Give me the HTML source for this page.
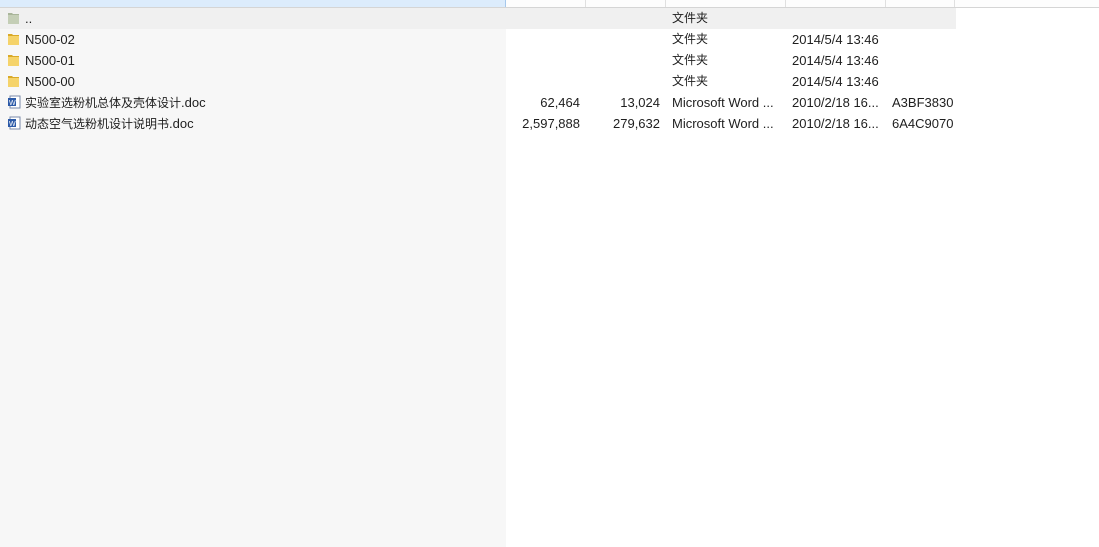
<!DOCTYPE html>
<html><head><meta charset="utf-8"><style>
body{margin:0;width:1099px;height:547px;overflow:hidden;background:#fff;font-family:"Liberation Sans","Noto Sans CJK SC",sans-serif;font-size:13px;color:#1e1e1e;position:relative}
.left{position:absolute;left:0;top:0;width:506px;height:547px;background:#f7f7f7}
.hdr{position:absolute;top:0;left:0;width:1099px;height:7px;background:#fdfdfd;border-bottom:1px solid #d5d5d5}
.hdr .n{position:absolute;left:0;top:0;width:505px;height:7px;background:#dcecfc;border-right:1px solid #a6c8ec}
.sep{position:absolute;top:0;height:7px;width:1px;background:#e0e0e0}
.row{position:absolute;left:0;height:21px;width:956px}
.row span{position:absolute;top:0;height:21px;line-height:21px;white-space:nowrap}
.c{font-size:12px}
.r{text-align:right}
.ic{position:absolute;left:7px;top:3px;width:14px;height:14px}
</style></head><body>
<div class="left"></div>
<div class="hdr"><div class="n"></div>
<div class="sep" style="left:585px"></div><div class="sep" style="left:665px"></div><div class="sep" style="left:785px"></div><div class="sep" style="left:885px"></div><div class="sep" style="left:954px"></div></div>
<div class="row" style="top:8px;background:#f0f0f0">
<svg class="ic" viewBox="0 0 14 14"><path d="M1 2h4l1 1h6v10H1z" fill="#a9b59a"/><path d="M1 4h11v9H1z" fill="#c4ceb6"/></svg>
<span style="left:25px">..</span><span class="c" style="left:672px">文件夹</span></div>
<div class="row" style="top:29px">
<svg class="ic" viewBox="0 0 14 14"><path d="M1 2h4l1 1h6v10H1z" fill="#d9a928"/><path d="M1 4h11v9H1z" fill="#f5d36a"/></svg>
<span style="left:25px">N500-02</span><span class="c" style="left:672px">文件夹</span><span style="left:792px">2014/5/4 13:46</span></div>
<div class="row" style="top:50px">
<svg class="ic" viewBox="0 0 14 14"><path d="M1 2h4l1 1h6v10H1z" fill="#d9a928"/><path d="M1 4h11v9H1z" fill="#f5d36a"/></svg>
<span style="left:25px">N500-01</span><span class="c" style="left:672px">文件夹</span><span style="left:792px">2014/5/4 13:46</span></div>
<div class="row" style="top:71px">
<svg class="ic" viewBox="0 0 14 14"><path d="M1 2h4l1 1h6v10H1z" fill="#d9a928"/><path d="M1 4h11v9H1z" fill="#f5d36a"/></svg>
<span style="left:25px">N500-00</span><span class="c" style="left:672px">文件夹</span><span style="left:792px">2014/5/4 13:46</span></div>
<div class="row" style="top:92px">
<svg class="ic" viewBox="0 0 14 14"><rect x="3" y="1" width="10" height="12" fill="#fff" stroke="#7a8aa8"/><rect x="1" y="3" width="8" height="8" fill="#2c5aa8"/><text x="2" y="10" font-size="7" fill="#fff" font-family="Liberation Sans">W</text></svg>
<span class="c" style="left:25px">实验室选粉机总体及壳体设计<span style="position:static;font-size:13px">.doc</span></span><span class="r" style="right:376px">62,464</span><span class="r" style="right:296px">13,024</span><span style="left:672px">Microsoft Word ...</span><span style="left:792px">2010/2/18 16...</span><span style="left:892px">A3BF3830</span></div>
<div class="row" style="top:113px">
<svg class="ic" viewBox="0 0 14 14"><rect x="3" y="1" width="10" height="12" fill="#fff" stroke="#7a8aa8"/><rect x="1" y="3" width="8" height="8" fill="#2c5aa8"/><text x="2" y="10" font-size="7" fill="#fff" font-family="Liberation Sans">W</text></svg>
<span class="c" style="left:25px">动态空气选粉机设计说明书<span style="position:static;font-size:13px">.doc</span></span><span class="r" style="right:376px">2,597,888</span><span class="r" style="right:296px">279,632</span><span style="left:672px">Microsoft Word ...</span><span style="left:792px">2010/2/18 16...</span><span style="left:892px">6A4C9070</span></div>
</body></html>
